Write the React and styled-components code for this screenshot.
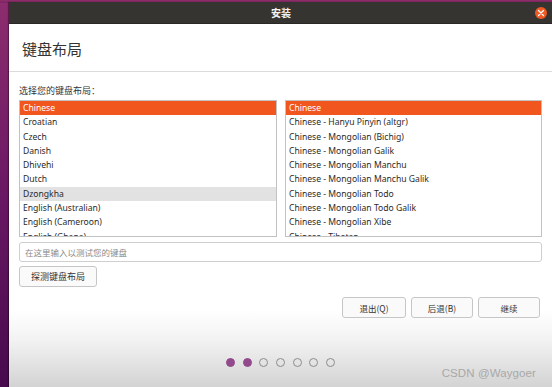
import React, { useState } from 'react'
import styled, { createGlobalStyle } from 'styled-components'

const GlobalStyle = createGlobalStyle`
    html, body {
        margin : 0;
        padding : 0;
    }
    body {
        width : 552px;
        height : 387px;
        overflow : hidden;
        font-family : "Noto Sans", "Noto Sans CJK SC", sans-serif;
        background : linear-gradient(180deg, #8d2d6f 0%, #6a1863 50%, #470a4d 100%);
    }
`

const layouts = [
    'Chinese',
    'Croatian',
    'Czech',
    'Danish',
    'Dhivehi',
    'Dutch',
    'Dzongkha',
    'English (Australian)',
    'English (Cameroon)',
    'English (Ghana)',
]

const variants = [
    'Chinese',
    'Chinese - Hanyu Pinyin (altgr)',
    'Chinese - Mongolian (Bichig)',
    'Chinese - Mongolian Galik',
    'Chinese - Mongolian Manchu',
    'Chinese - Mongolian Manchu Galik',
    'Chinese - Mongolian Todo',
    'Chinese - Mongolian Todo Galik',
    'Chinese - Mongolian Xibe',
    'Chinese - Tibetan',
]

const steps = 7
const doneSteps = 2

function App() {

    const [layout, setLayout] = useState('Chinese')
    const [variant, setVariant] = useState('Chinese')

    return (
    <Desktop>
        <GlobalStyle/>
        <Window>
            <TitleBar>
                <Title>安装</Title>
                <CloseButton>
                    <svg width="8" height="8" viewBox="0 0 8 8">
                        <path d="M1.5 1.5 L6.5 6.5 M6.5 1.5 L1.5 6.5" stroke="#fff" strokeWidth="1.3" strokeLinecap="round"/>
                    </svg>
                </CloseButton>
            </TitleBar>
            <Heading>键盘布局</Heading>
            <Content>
                <Label>选择您的键盘布局：</Label>
                <Lists>
                    <List>
                        {layouts.map((name) => (
                            <Row
                                key={name}
                                selected={name === layout}
                                hovered={name === 'Dzongkha'}
                                onClick={() => setLayout(name)}
                            >
                                {name}
                            </Row>
                        ))}
                    </List>
                    <List>
                        {variants.map((name) => (
                            <Row
                                key={name}
                                selected={name === variant}
                                onClick={() => setVariant(name)}
                            >
                                {name}
                            </Row>
                        ))}
                    </List>
                </Lists>
                <TestInput placeholder="在这里输入以测试您的键盘"/>
                <DetectButton>探测键盘布局</DetectButton>
                <Actions>
                    <ActionButton width={64}>退出(Q)</ActionButton>
                    <ActionButton width={62}>后退(B)</ActionButton>
                    <ActionButton width={62}>继续</ActionButton>
                </Actions>
                <Dots>
                    {Array.from({ length: steps }).map((_, i) => (
                        <Dot key={i} done={i < doneSteps}/>
                    ))}
                </Dots>
            </Content>
            <Watermark>CSDN @Waygoer</Watermark>
        </Window>
    </Desktop>
    );
}

export default App

const Desktop = styled.div`
    width : 552px;
    height : 387px;
    padding : 2px 0 0 9px;
    box-sizing : border-box;
    background : linear-gradient(180deg, #8e2f68 0px, #7c2264 3px, transparent 3px);
`

const Window = styled.div`
    position : relative;
    height : 385px;
    display : flex;
    flex-direction : column;
    background : linear-gradient(180deg, #ffffff 0%, #ffffff 80%, #f2f2f2 88%, #d3d3d3 100%);
    box-shadow : -1px 0 1px rgba(0,0,0,.35);
`

const TitleBar = styled.div`
    height : 22px;
    flex-shrink : 0;
    background : #363431;
    display : flex;
    align-items : center;
    justify-content : center;
    position : relative;
    border-bottom : 1px solid #2a2826;
    box-sizing : border-box;
`

const Title = styled.div`
    color : #f2f2f2;
    font-size : 10px;
    font-weight : 700;
    font-family : "Noto Sans CJK SC", sans-serif;
    margin-left : 1px;
`

const CloseButton = styled.div`
    position : absolute;
    right : 5px;
    top : 5px;
    width : 12px;
    height : 12px;
    border-radius : 50%;
    background : #ee5a24;
    display : flex;
    align-items : center;
    justify-content : center;
`

const Heading = styled.div`
    height : 48px;
    flex-shrink : 0;
    display : flex;
    align-items : center;
    padding-left : 13px;
    padding-top : 2px;
    box-sizing : border-box;
    font-family : "Noto Sans CJK SC", sans-serif;
    font-size : 15px;
    color : #333;
    border-bottom : 1px solid #dcdcdc;
`

const Content = styled.div`
    padding : 0 10px;
    display : flex;
    flex-direction : column;
`

const Label = styled.div`
    font-family : "Noto Sans CJK SC", sans-serif;
    font-size : 9px;
    color : #333;
    height : 28px;
    line-height : 12px;
    padding-top : 13px;
    box-sizing : border-box;
`

const Lists = styled.div`
    display : grid;
    grid-template-columns : 258px 257px;
    gap : 8px;
`

const List = styled.div`
    height : 137px;
    border : 1px solid #c2c2c2;
    box-sizing : border-box;
    overflow : hidden;
    background : #fff;
`

const Row = styled.div`
    height : 14.3px;
    line-height : 14.3px;
    padding-left : 3px;
    font-size : 8.6px;
    white-space : nowrap;
    color : ${(p) => (p.selected ? '#fff' : '#2a2a2a')};
    background : ${(p) => (p.selected ? '#f0561d' : p.hovered ? '#e2e2e2' : 'transparent')};
    cursor : default;
`

const TestInput = styled.input`
    margin-top : 5px;
    height : 20px;
    border : 1px solid #cfcfcf;
    border-radius : 3px;
    padding : 0 5px;
    box-sizing : border-box;
    font-family : "Noto Sans CJK SC", sans-serif;
    font-size : 8.5px;
    color : #333;
    outline : none;
    &::placeholder {
        color : #8a8a8a;
    }
`

const DetectButton = styled.button`
    margin-top : 4px;
    width : 78px;
    height : 21px;
    border : 1px solid #c6c6c6;
    border-radius : 3px;
    background : #fafafa;
    font-family : "Noto Sans CJK SC", sans-serif;
    font-size : 9px;
    color : #333;
    padding : 0;
`

const Actions = styled.div`
    margin-top : 10px;
    display : flex;
    justify-content : flex-end;
    gap : 5px;
    padding-right : 2px;
`

const ActionButton = styled.button`
    width : ${(p) => p.width}px;
    height : 21px;
    border : 1px solid #c6c6c6;
    border-radius : 3px;
    background : #fafafa;
    font-family : "Noto Sans CJK SC", sans-serif;
    font-size : 8.5px;
    color : #333;
    padding : 0;
`

const Dots = styled.div`
    margin-top : 40px;
    display : flex;
    justify-content : center;
    gap : 7.7px;
`

const Dot = styled.div`
    width : 9px;
    height : 9px;
    border-radius : 50%;
    box-sizing : border-box;
    background : ${(p) => (p.done ? '#924a8c' : 'transparent')};
    border : 1px solid ${(p) => (p.done ? '#924a8c' : '#8c8c8c')};
`

const Watermark = styled.div`
    position : absolute;
    right : 16px;
    bottom : 8px;
    font-family : "Liberation Sans", sans-serif;
    font-size : 11.5px;
    color : #a8a8a8;
    letter-spacing : 0.1px;
`
